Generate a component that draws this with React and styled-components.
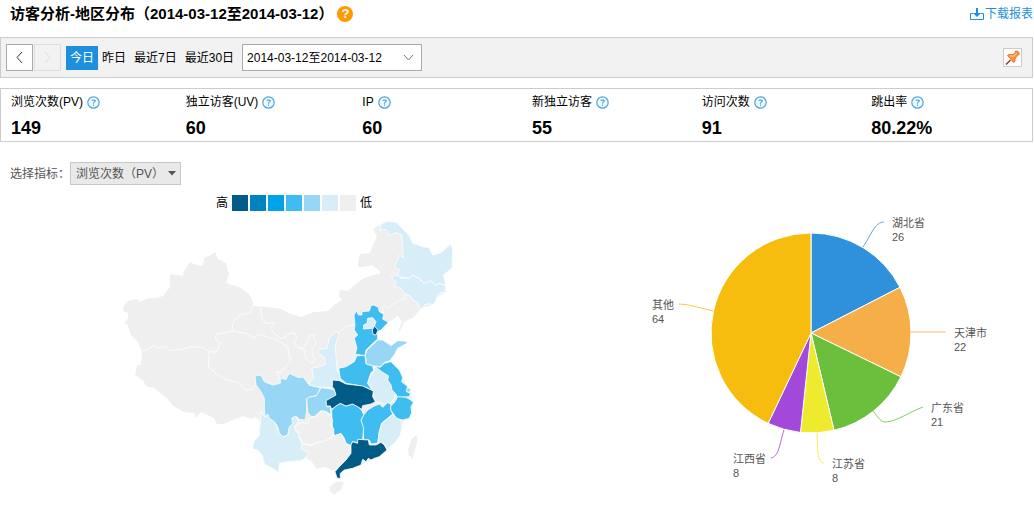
import React from "react"
import styled, { createGlobalStyle } from "styled-components"

const GlobalStyle = createGlobalStyle`
  * {
    box-sizing: border-box;
  }

  body {
    margin: 0;
    background: #fff;
    color: #000;
    font-family: "Liberation Sans", "Noto Sans CJK SC", sans-serif;
    font-size: 12px;
    line-height: 18px;
  }

  button, select {
    font: inherit;
    color: inherit;
  }
`

const Page = styled.main`
  padding-right: 1px;
`

const Header = styled.header`
  display: flex;
  justify-content: space-between;
  align-items: center;
  padding: 4px 0 13px 10px;
`

const Title = styled.h1`
  display: flex;
  align-items: center;
  gap: 4px;
  margin: 0;
  font-size: 15px;
  line-height: 20px;
`

const HelpBadge = styled.button`
  width: 16px;
  height: 16px;
  padding: 0;
  border: 0;
  border-radius: 50%;
  background: #ff9a00;
  color: #fff;
  font-size: 13px;
  font-weight: bold;
  line-height: 16px;
`

const Download = styled.a`
  display: flex;
  align-items: center;
  gap: 1px;
  color: #1e8fdc;
  text-decoration: none;
`

const Toolbar = styled.div`
  display: flex;
  align-items: center;
  height: 41px;
  padding: 0 10px 0 5px;
  border: 1px solid #ccc;
  background: #f2f2f2;
`

const Step = styled.button`
  display: flex;
  justify-content: center;
  align-items: center;
  width: 27px;
  height: 27px;
  margin-right: 1px;
  padding: 0;
  border: 1px solid ${props => (props.disabled ? "#ddd" : "#aaa")};
  background: ${props => (props.disabled ? "#f2f2f2" : "#fff")};
  color: ${props => (props.disabled ? "#ddd" : "#333")};
`

const Ranges = styled.div`
  display: flex;
  margin: 0 4px;
`

const Range = styled.button`
  height: 24px;
  padding: 0 4px;
  border: 0;
  background: ${props => (props.$active ? "#1e8fdc" : "none")};
  color: ${props => (props.$active ? "#fff" : "#000")};
`

const SelectBox = styled.div`
  position: relative;
  color: ${props => (props.$muted ? "#555" : "#000")};

  svg {
    position: absolute;
    top: 0;
    bottom: 0;
    right: ${props => (props.$muted ? "5px" : "8px")};
    margin: auto 0;
    pointer-events: none;
  }
`

const Select = styled.select`
  display: block;
  appearance: none;
  border-radius: 0;
`

const DateSelect = styled(Select)`
  width: 180px;
  height: 27px;
  padding: 0 4px;
  border: 1px solid #aaa;
  background: #fff;
`

const MetricSelect = styled(Select)`
  width: 111px;
  height: 23px;
  padding: 0 5px;
  border: 1px solid #c6c6c6;
  background: #e9e9e9;
`

const PinButton = styled.button`
  width: 19px;
  height: 19px;
  margin-left: auto;
  padding: 0;
  border: 1px solid #ccc;
  background: #fff;

  svg {
    display: block;
  }
`

const Stats = styled.dl`
  display: grid;
  grid-template-columns: 175fr 177fr 170fr 170fr 170fr 161fr;
  margin: 10px 0 20px;
  padding: 4px 0 1px 10px;
  border: 1px solid #ccc;
`

const StatLabel = styled.dt`
  display: flex;
  align-items: center;
  gap: 4px;
`

const StatValue = styled.dd`
  margin: 5px 0 0;
  font-size: 18px;
  font-weight: bold;
  line-height: 24px;
`

const HintButton = styled.button`
  padding: 0;
  border: 0;
  background: none;

  svg {
    display: block;
  }
`

const Metric = styled.div`
  display: flex;
  align-items: center;
  padding-left: 10px;
  color: #555;
`

const Charts = styled.div`
  display: grid;
  grid-template-columns: 17fr 13fr;
  justify-items: center;
  align-items: start;
  margin: 10px 0 0 2px;
`

const MapPanel = styled.section`
  display: flex;
  flex-direction: column;
  align-items: center;
  gap: 4px;
`

const Legend = styled.div`
  display: flex;
  align-items: center;
  gap: 4px;
  height: 16px;
`

const Swatches = styled.div`
  display: flex;
  gap: 2px;
`

const Swatch = styled.span`
  width: 16px;
  height: 16px;
  background: ${props => props.$color};
`

const ChinaSvg = styled.svg`
  display: block;
  width: 350px;
`

const Land = styled.path`
  stroke: ${props => (props.$base ? "none" : "#fff")};
  stroke-width: 1px;
  stroke-opacity: 0.8;
  stroke-linejoin: round;
  vector-effect: non-scaling-stroke;
`

const PieSvg = styled.svg`
  display: block;
  width: 360px;
`

const PieLabel = styled.text`
  fill: #555;
  font-size: 11px;
`

const levels = ["#005c87", "#0084bf", "#00a3ea", "#40bdf0", "#97d6f5", "#d7edf8", "#efefef"]

const stats = [
  ["浏览次数(PV)", "149"],
  ["独立访客(UV)", "60"],
  ["IP", "60"],
  ["新独立访客", "55"],
  ["访问次数", "91"],
  ["跳出率", "80.22%"],
]

const mainland =
  "122,311 123,305 127,301 136,299 139,302 143,300 148,298 155,298 162,296 166,291 169,287 169,274 182,276 183,271 189,262 195,265 202,266 203,258 210,255 214,252 217,259 225,263 228,274 225,283 240,288 248,294 252,302 252,306 267,307 280,309 290,314 300,317 313,312 327,311 333,305 341,300 338,296 339,290 347,291 355,284 363,278 372,275 379,274 379,271 375,268 371,265 362,267 357,267 357,262 359,254 369,253 372,245 376,237 372,229 380,224 386,221 395,222 402,229 408,236 412,243 422,247 428,248 432,255 440,253 449,244 452,248 451,268 442,275 445,285 445,292 440,295 435,298 432,305 423,307 420,309 413,317 403,322 399,331 397,331 401,322 397,316 390,321 387,322 380,329 377,332 377,338 380,341 386,342 390,345 388,361 398,370 402,378 406,387 410,392 411,402 409,416 403,421 401,427 399,435 390,445 386,449 378,457 368,461 358,466 343,470 339,475 339,478 335,475 334,471 323,467 315,469 312,462 306,458 299,461 287,462 278,463 278,472 270,467 263,464 262,456 257,450 251,449 253,442 258,435 259,422 256,417 250,419 242,416 232,420 223,424 216,424 213,418 200,412 195,418 193,413 183,412 172,406 166,398 153,388 145,386 142,380 134,375 136,365 140,365 141,352 137,342 129,334 128,330 127,325 123,323 127,319 127,313"

// Province outlines, each sheet in thirds of a map unit from its own origin
const sheets = [
  {
    origin: "110 215",
    borders: [
      "95,408 110,405 125,392 145,400 165,393 175,407 215,403 240,395 275,397 295,410 310,412 318,408 328,385 313,370 315,358 345,352",
      "295,410 292,455 320,480 350,495 385,503 402,525 425,523 435,510",
    ],
    regions: [],
  },
  {
    origin: "225 300",
    borders: [
      "80,15 75,38 50,42 30,55 20,70 18,92",
      "103,20 108,55 118,70 148,68 135,85 150,105 165,115 178,112 180,103 207,98 212,115 203,130 218,144 235,150 240,175 255,190 268,180 262,170 258,150 272,130 262,118 268,103 250,105 245,125 232,145 218,144",
      "0,97 18,93 60,100 85,115 95,103 150,118 185,140 193,185 165,215 152,215 162,240",
    ],
    regions: [],
  },
  {
    origin: "280 215",
    borders: [
      "375,238 373,250 350,257 330,272 320,282 312,272 305,280 308,298",
      "172,353 195,335 220,328",
    ],
    regions: [
      [5, "300,27 318,19 345,22 365,42 385,62 395,85 425,95 445,98 455,120 480,113 508,87 515,100 513,160 487,180 495,210 475,205 465,212 450,197 430,205 415,190 395,180 385,190 355,185 350,178 355,165 340,155 350,135 355,120 367,128 362,60 345,52 325,62 315,43 298,45"],
      [5, "330,185 352,180 360,190 385,190 395,180 415,192 430,205 450,197 465,212 475,205 495,213 490,235 480,232 470,240 465,255 455,270 445,265 430,270 425,282 415,277 410,262 395,255 388,243 372,237 360,220 342,215 345,202"],
      [3, "278,270 292,277 295,290 308,298 305,312 322,322 300,345 290,350 290,372 270,390 255,405 252,422 222,417 228,400 220,370 230,360 220,345 222,330 220,310 219,300 228,287 232,300 243,300 243,290 265,288 270,272"],
      [5, "260,310 275,308 285,320 278,340 247,342 248,330 258,325"],
      [0, "280,333 291,345 285,360 276,358 274,345"],
    ],
  },
  {
    origin: "120 330",
    borders: [],
    regions: [
      [5, "418,275 420,245 433,262 440,252 460,275 475,310 487,320 500,315 505,290 512,265 525,258 532,275 520,290 525,305 538,312 536,325 542,340 545,350 565,363 568,372 540,392 500,395 475,400 473,428 450,412 430,402 425,378 410,360 394,357 398,335 415,315"],
      [4, "402,138 420,135 430,155 455,165 478,160 478,145 495,148 505,130 530,142 547,142 565,165 585,170 598,173 595,183 585,198 570,200 557,207 557,245 552,270 535,268 525,258 512,265 515,280 505,290 500,315 487,320 475,310 470,290 460,275 445,265 440,252 433,262 430,240 430,205 420,185 405,165"],
    ],
  },
  {
    origin: "290 290",
    borders: [],
    regions: [
      [5, "140,126 143,135 133,165 135,200 138,235 148,265 145,272 128,270 125,292 100,292 75,290 55,285 57,273 68,265 62,235 85,230 105,223 98,200 80,190 85,178 108,175 115,145 135,125"],
      [4, "90,293 120,297 130,300 135,315 105,335 108,350 118,350 120,375 105,365 90,362 70,380 58,378 50,365 47,325 60,320 75,318 85,303"],
      [4, "260,150 275,150 300,167 320,152 348,154 348,160 320,175 310,195 295,213 280,217 268,230 245,228 225,222 225,210 222,195 230,178 245,165"],
      [3, "143,235 165,230 190,215 197,198 222,196 225,222 245,228 248,242 240,248 235,262 230,280 245,302 225,292 195,285 165,280 148,265"],
      [5, "252,230 275,245 293,258 290,270 300,285 303,300 313,310 310,325 298,340 275,340 255,335 248,325 247,303 240,292 230,280 237,262 245,250"],
      [3, "250,228 268,232 280,220 300,215 325,240 335,262 332,275 350,290 347,305 358,310 355,320 320,322 313,310 303,300 300,285 290,270 293,258 275,247"],
      [4, "349,293 359,296 360,303 352,307 346,302"],
      [3, "320,320 345,322 360,330 367,338 360,350 362,368 355,385 335,390 315,385 310,375 300,362 298,348 310,338"],
      [3, "218,375 230,360 250,348 265,342 275,352 290,338 300,342 298,358 305,372 290,385 272,400 265,425 260,460 240,462 235,450 218,448 216,415 210,390"],
      [5, "305,374 318,385 330,392 333,410 328,435 310,460 288,477 280,462 260,460 265,425 272,400 290,385"],
      [3, "122,360 135,348 148,340 165,348 185,342 200,350 212,360 218,375 210,390 218,415 215,448 203,450 200,458 185,455 178,467 165,460 160,445 150,430 130,438 125,415 123,395"],
      [0, "125,270 145,272 165,282 215,288 247,303 245,320 253,335 240,342 215,347 212,358 200,350 185,342 165,348 148,340 135,348 122,358 118,348 107,348 105,332 135,315 130,298 124,290"],
      [6, "15,405 35,398 50,400 55,385 75,380 92,362 108,368 120,375 125,395 115,405 128,415 128,435 105,452 80,458 60,465 35,460 30,445 22,440 25,425 12,418"],
      [6, "60,468 80,458 105,452 125,438 150,432 165,460 178,467 180,490 160,512 135,540 125,542 100,532 75,537 62,515 45,505 52,488 30,478 35,460"],
      [0, "200,448 232,450 235,465 255,465 270,457 280,465 288,480 265,500 250,505 240,510 232,505 225,515 215,508 210,525 185,535 160,540 148,550 148,566 138,564 132,545 145,530 165,510 180,490 180,465 185,455 200,460"],
      [6, "375,435 381,440 378,465 370,490 365,510 352,495 350,475 362,445"],
      [6, "115,590 135,575 155,573 160,580 148,602 130,614 115,605"],
    ],
  },
]

const slices = [
  { name: "湖北省", value: 26, color: "#2f91db", x: 892, y: 227, line: "M863 247C871 235 875 222 884 222" },
  { name: "天津市", value: 22, color: "#f6ae48", x: 954, y: 337, line: "M911 332L946 332" },
  { name: "广东省", value: 21, color: "#6cbf3d", x: 931, y: 412, line: "M873 411C879 418 880 422 886 422C898 421 909 412 923 407" },
  { name: "江苏省", value: 8, color: "#eeeb2e", x: 832, y: 468, line: "M817 433C818 448 817 463 824 463" },
  { name: "江西省", value: 8, color: "#a349da", x: 733, y: 463, line: "M784 430C780 442 779 457 771 458" },
  { name: "其他", value: 64, color: "#f6bd0f", x: 652, y: 309, line: "M713 311L697 307Q687 304 679 304" },
]

const center = { x: 811, y: 333, r: 100 }
const total = slices.reduce((sum, slice) => sum + slice.value, 0)

const pointAt = value => {
  const angle = (value / total) * Math.PI * 2
  return `${center.x + center.r * Math.sin(angle)} ${center.y - center.r * Math.cos(angle)}`
}

const toPath = points => `M${points.split(" ").join("L")}`

const Hint = ({ label }) => (
  <HintButton aria-label={label}>
    <svg width="13" height="13" viewBox="0 0 13 13" fill="none">
      <circle cx="6.5" cy="6.5" r="5.7" fill="#f0f8fd" stroke="#4da6df" strokeWidth="1.2" />
      <path d="M4.6 4.2H8.2V5.6L6.5 6.6V7.6M6.5 8.6V9.8" stroke="#2c91d6" />
    </svg>
  </HintButton>
)

const Chevron = ({ d, width = 9, height = 13, color = "currentColor" }) => (
  <svg width={width} height={height} viewBox={`0 0 ${width} ${height}`} fill="none">
    <path d={d} stroke={color} />
  </svg>
)

const DownloadIcon = () => (
  <svg width="14" height="14" viewBox="0 0 14 14">
    <path d="M3 6.5H.5V12.5H13.5V6.5H11" fill="none" stroke="#1e8fdc" />
    <path d="M6 1H8V6H11L7 10L3 6H6Z" fill="#1e8fdc" />
  </svg>
)

const PinIcon = () => (
  <svg width="17" height="17" viewBox="0 0 17 17">
    <path d="M2 15.5L6.5 11" stroke="#8c3b12" strokeWidth="1.4" />
    <path
      d="M3.5 6.5L5 5.5L9 5.5L11 3.5L11.5 2H13.5L15.5 4.5L14.5 6L12.5 7.5L11 10V12.5L9.5 13.5L7 10.5Z"
      fill="#ff9440"
      stroke="#dd6414"
      strokeWidth=".8"
    />
    <path d="M6 6.8L9.5 7.2L12.5 4.2" fill="none" stroke="#ffd8b0" />
  </svg>
)

const ChinaMap = () => (
  <ChinaSvg viewBox="118 215 350 290" role="img" aria-label="地区分布">
    <Land $base d={`${toPath(mainland)}Z`} fill={levels[6]} />
    {sheets.map(sheet => (
      <g key={sheet.origin} transform={`translate(${sheet.origin}) scale(0.33333)`}>
        {sheet.borders.map(points => (
          <Land key={points} d={toPath(points)} fill="none" />
        ))}
        {sheet.regions.map(([level, points]) => (
          <Land key={points} d={`${toPath(points)}Z`} fill={levels[level]} />
        ))}
      </g>
    ))}
  </ChinaSvg>
)

const Pie = () => {
  let start = 0
  return (
    <PieSvg viewBox="630 195 360 300">
      {slices.map(slice => {
        const from = start
        start += slice.value
        return (
          <g key={slice.name}>
            <path
              d={`M${center.x} ${center.y}L${pointAt(from)}A${center.r} ${center.r} 0 0 1 ${pointAt(start)}Z`}
              fill={slice.color}
              stroke="#fff"
              strokeLinejoin="round"
            />
            <path d={slice.line} fill="none" stroke={slice.color} strokeOpacity=".8" />
            <PieLabel x={slice.x} y={slice.y}>
              {slice.name}
              <tspan x={slice.x} dy="14">
                {slice.value}
              </tspan>
            </PieLabel>
          </g>
        )
      })}
    </PieSvg>
  )
}

const App = () => (
  <Page>
    <GlobalStyle />
    <Header>
      <Title>
        访客分析-地区分布（2014-03-12至2014-03-12）
        <HelpBadge aria-label="帮助">?</HelpBadge>
      </Title>
      <Download href="#download">
        <DownloadIcon />
        下载报表
      </Download>
    </Header>
    <Toolbar>
      <Step aria-label="前一天">
        <Chevron d="M7 1L2 6.5L7 12" />
      </Step>
      <Step aria-label="后一天" disabled>
        <Chevron d="M2 1L7 6.5L2 12" />
      </Step>
      <Ranges>
        <Range $active>今日</Range>
        <Range>昨日</Range>
        <Range>最近7日</Range>
        <Range>最近30日</Range>
      </Ranges>
      <SelectBox>
        <DateSelect aria-label="日期范围">
          <option>2014-03-12至2014-03-12</option>
        </DateSelect>
        <Chevron d="M1 1L5.5 6L10 1" width={11} height={7} color="#777" />
      </SelectBox>
      <PinButton aria-label="固定">
        <PinIcon />
      </PinButton>
    </Toolbar>
    <Stats>
      {stats.map(([label, value]) => (
        <div key={label}>
          <StatLabel>
            {label}
            <Hint label={`${label}说明`} />
          </StatLabel>
          <StatValue>{value}</StatValue>
        </div>
      ))}
    </Stats>
    <Metric>
      <label htmlFor="metric">选择指标：</label>
      <SelectBox $muted>
        <MetricSelect id="metric">
          <option>浏览次数（PV）</option>
        </MetricSelect>
        <svg width="8" height="5" viewBox="0 0 8 5">
          <path d="M0 0H8L4 4.5Z" fill="#555" />
        </svg>
      </SelectBox>
    </Metric>
    <Charts>
      <MapPanel>
        <Legend>
          高
          <Swatches>
            {levels.map(color => (
              <Swatch key={color} $color={color} />
            ))}
          </Swatches>
          低
        </Legend>
        <ChinaMap />
      </MapPanel>
      <Pie />
    </Charts>
  </Page>
)

export default App
